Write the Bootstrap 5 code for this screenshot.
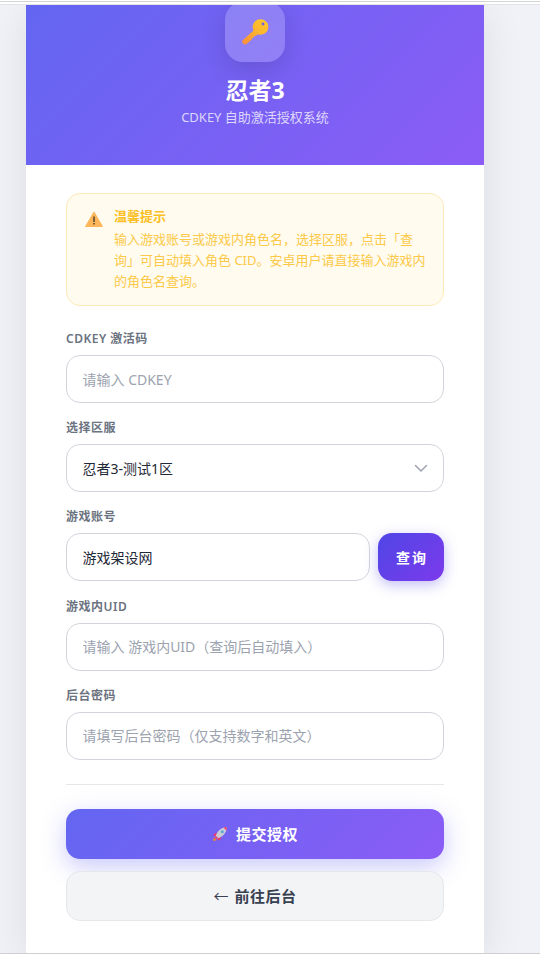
<!DOCTYPE html>
<html lang="zh-CN">
<head>
<meta charset="utf-8">
<title>忍者3</title>
<link href="https://cdn.jsdelivr.net/npm/bootstrap@5.3.0/dist/css/bootstrap.min.css" rel="stylesheet">
<style>
html,body{height:100%;margin:0;overflow:hidden}
body{font-family:"Noto Sans","Noto Sans CJK SC",sans-serif;background:#fff}
.topbar{height:5px;flex:none;background:linear-gradient(#fff 0,#fff 1px,#d4d4d4 1px,#d4d4d4 2.5px,#fff 2.5px,#fff 4px,#e4e4e6 4px)}
.botbar{height:3px;flex:none;background:linear-gradient(#cfcfd2 0,#cfcfd2 1px,#fff 1px)}
.stage{flex:1 1 auto;min-height:0;overflow:hidden;background:#f0f2f7;padding:0 56px 0 26px}
.panel{background:#fff;box-shadow:0 8px 40px rgba(0,0,0,.09);height:100%}
.hero{height:160px;background:linear-gradient(135deg,#6366f1,#8b5cf6);color:#fff}
.keybox{width:60px;height:60px;margin-top:-3px;border-radius:18px;background:rgba(255,255,255,.2);box-shadow:0 8px 24px rgba(0,0,0,.12)}
.hero-title{font-size:23px;font-weight:700;line-height:28px;margin-top:14px}
.hero-sub{font-size:13px;line-height:18px;margin-top:4px;color:rgba(255,255,255,.75)}
.formwrap{padding:28px 40px 0}
.notice{height:113px;background:#fffbef;border:1px solid #fdeab8;border-radius:14px;padding:13px 16px 0 18px;gap:11px;margin-bottom:25px}
.notice-title{font-size:13px;font-weight:700;color:#fbbf24;line-height:18px}
.notice-text{font-size:13px;line-height:20.8px;color:#fcc949;margin-top:4px}
.warn{margin-top:3px;flex:none}
.fieldlabel{font-size:12px;font-weight:600;color:#6b7280;line-height:16px;margin-bottom:8px;letter-spacing:.5px;display:block}
.fieldgap{margin-bottom:17.2px}
.fieldgap-b{margin-bottom:24px}
.entry.form-control,.entry.form-select{height:48px;border:1px solid #d1d5db;border-radius:14px;font-size:14px;color:#1f2937;padding:0 16px 0 15.500px;font-family:inherit;box-shadow:none}
.entry.form-select{background-image:url("data:image/svg+xml,%3csvg xmlns='http://www.w3.org/2000/svg' viewBox='0 0 16 16'%3e%3cpath fill='none' stroke='%239ca3af' stroke-linecap='round' stroke-linejoin='round' stroke-width='1.5' d='M2.500 5.500 8 11l5.500-5.500'/%3e%3c/svg%3e");background-size:16px 16px;background-position:right 14px center}
.entry::placeholder{color:#9ca3af;opacity:1}
.querybtn{flex:none;width:66px;height:48px;border:0;border-radius:14px;font-size:14px;font-weight:700;letter-spacing:2px;color:#fff;background:linear-gradient(135deg,#4f46e5,#7c3aed);box-shadow:0 4px 14px rgba(79,70,229,.35);padding:0 0 0 2px}
.querybtn:hover{color:#fff}
.sep{height:1px;background:#e5e7eb;margin:0 0 24px}
.submitbtn{height:50px;width:100%;border:0;border-radius:14px;background:linear-gradient(135deg,#6366f1,#8b5cf6);color:#fff;font-size:15px;font-weight:700;box-shadow:0 8px 24px rgba(99,102,241,.35);gap:8px;letter-spacing:.5px}
.submitbtn:hover{color:#fff}
.backbtn{height:50px;width:100%;margin-top:12px;border:1px solid #e5e7eb;border-radius:14px;background:#f3f4f6;color:#374151;font-size:15px;font-weight:700;letter-spacing:.5px}
.backbtn:hover{color:#374151;background:#f3f4f6}
.arrowglyph{font-weight:400;margin-right:1px}
</style>
</head>
<body class="d-flex flex-column">
<div class="topbar"></div>
<div class="stage">
  <div class="panel">
    <header class="hero d-flex flex-column align-items-center text-center">
      <div class="keybox d-flex align-items-center justify-content-center">
        <svg width="30" height="30" viewBox="0 0 30 30" aria-hidden="true">
          <defs><linearGradient id="kg" x1="0" y1="1" x2="1" y2="0"><stop offset="0" stop-color="#f98b3d"/><stop offset=".55" stop-color="#fdb52e"/><stop offset="1" stop-color="#fdc92c"/></linearGradient></defs>
          <path d="M2.600 23.200 13.600 13.600A7.800 7.800 0 1 1 20.600 17.800C19.500 17.800 18.500 17.600 17.600 17.200L15.800 19 14 19 13.800 20.800 12 21 11.800 22.600 6.800 26.800C4.300 28.800.9 25.400 2.600 23.200Z" fill="url(#kg)"/>
          <circle cx="23" cy="7" r="1.400" fill="#6f62e8"/>
        </svg>
      </div>
      <div class="hero-title">忍者3</div>
      <div class="hero-sub">CDKEY 自助激活授权系统</div>
    </header>
    <form class="formwrap">
      <div class="notice d-flex">
        <svg class="warn" width="18" height="18" viewBox="0 0 18 18" aria-hidden="true">
          <path d="M9 2 17.500 16.500H.5z" fill="#fdb75a" stroke="#fdb75a" stroke-linejoin="round"/>
          <rect x="8.300" y="6.500" width="1.400" height="5.500" fill="#4b3a2a"/>
          <rect x="8.300" y="13" width="1.400" height="1.500" fill="#4b3a2a"/>
        </svg>
        <div>
          <div class="notice-title">温馨提示</div>
          <div class="notice-text">输入游戏账号或游戏内角色名，选择区服，点击「查询」可自动填入角色 CID。安卓用户请直接输入游戏内的角色名查询。</div>
        </div>
      </div>
      <div class="fieldgap">
        <label class="fieldlabel">CDKEY 激活码</label>
        <input class="form-control entry" placeholder="请输入 CDKEY">
      </div>
      <div class="fieldgap">
        <label class="fieldlabel">选择区服</label>
        <select class="form-select entry"><option>忍者3-测试1区</option></select>
      </div>
      <div class="fieldgap">
        <label class="fieldlabel">游戏账号</label>
        <div class="d-flex gap-2">
          <input class="form-control entry" value="游戏架设网">
          <button type="button" class="btn querybtn">查询</button>
        </div>
      </div>
      <div class="fieldgap">
        <label class="fieldlabel">游戏内UID</label>
        <input class="form-control entry" placeholder="请输入 游戏内UID（查询后自动填入）">
      </div>
      <div class="fieldgap-b">
        <label class="fieldlabel">后台密码</label>
        <input class="form-control entry" placeholder="请填写后台密码（仅支持数字和英文）">
      </div>
      <div class="sep"></div>
      <button type="button" class="btn submitbtn d-flex align-items-center justify-content-center">
        <svg width="16" height="16" viewBox="0 0 16 16" aria-hidden="true">
          <path d="M1 15 1.800 11.200 4.800 14.200z" fill="#e8863a"/>
          <path d="M4.500 6.500 1.500 8.500 2.500 10.500 5 10zM9.500 11.500 7.500 14.500 5.500 13.500 6 11z" fill="#f0386b"/>
          <path d="M3.300 11.800 4.500 8C6 4.500 9.500 2 13 1.300 14.500 1 15 1.500 14.700 3 14 6.500 11.500 10 8 11.500L4.200 12.700z" fill="#c9ccd6"/>
          <path d="M11.500 1.600 13 1.300C14.500 1 15 1.500 14.700 3L14.400 4.500z" fill="#f0386b"/>
          <circle cx="10.300" cy="5.700" r="1.500" fill="#5aa7d8"/>
          <path d="M3.300 12.700 5.200 10.800" stroke="#f0386b" stroke-width="1.800"/>
        </svg>
        <span>提交授权</span>
      </button>
      <button type="button" class="btn backbtn p-0 d-block"><span class="arrowglyph">←</span> 前往后台</button>
    </form>
  </div>
</div>
<div class="botbar"></div>
</body>
</html>
